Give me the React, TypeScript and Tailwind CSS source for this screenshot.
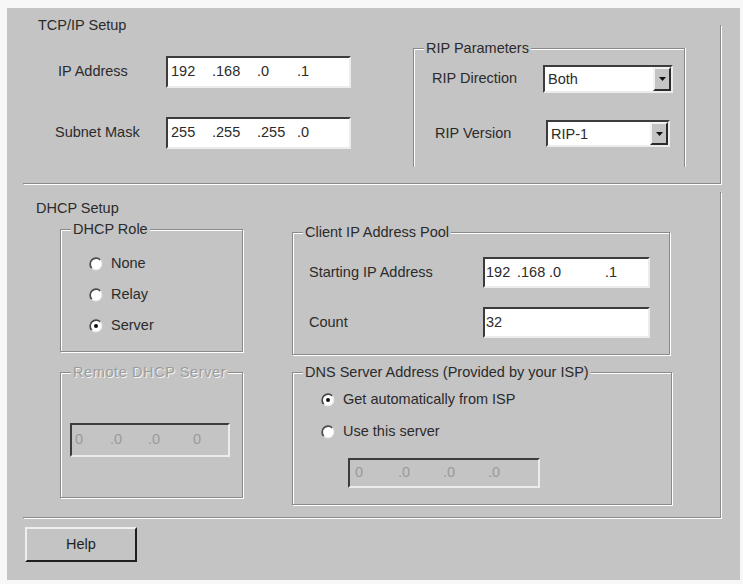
import clsx from 'clsx';
import type { ReactNode } from 'react';

// Classic Windows "Router Setup" style dialog

interface Seg {
  text: string;
  w: string;
}

function IpField({ segs, className, disabled, pad }: { segs: Seg[]; className: string; disabled?: boolean; pad: string }) {
  return (
    <div
      className={clsx(
        'flex items-center border-2 border-t-[#3c3c3c] border-l-[#3c3c3c] border-r-[#ececec] border-b-[#ececec]',
        disabled ? 'bg-[#c4c4c4] text-[#9a9a9a]' : 'bg-white text-[#2b2b2b]',
        pad,
        className
      )}
    >
      {segs.map((s, i) => (
        <span key={i} className={clsx('shrink-0 whitespace-pre', s.w)}>
          {s.text}
        </span>
      ))}
    </div>
  );
}

function Select({ value, className }: { value: string; className: string }) {
  return (
    <div
      className={clsx(
        'flex border-2 border-t-[#3c3c3c] border-l-[#3c3c3c] border-r-[#ececec] border-b-[#ececec] bg-white',
        className
      )}
    >
      <span className="flex-1 pl-[3px] leading-[24px] text-[#2b2b2b]">{value}</span>
      <div className="flex w-[18px] items-center justify-center border-2 border-t-[#f2f2f2] border-l-[#f2f2f2] border-r-[#2a2a2a] border-b-[#2a2a2a] bg-[#c4c4c4]">
        <svg width="7" height="4" viewBox="0 0 7 4">
          <polygon points="0,0 7,0 3.5,4" fill="#111" />
        </svg>
      </div>
    </div>
  );
}

function Radio({ checked, label, className }: { checked?: boolean; label: string; className: string }) {
  return (
    <div className={clsx('flex items-center', className)}>
      <svg width="14" height="14" viewBox="0 0 14 14" className="shrink-0">
        <circle cx="7" cy="7" r="6" fill="#fff" />
        <path d="M2.76 11.24 A6 6 0 0 1 11.24 2.76" fill="none" stroke="#4a4a4a" strokeWidth="1.7" />
        <path d="M11.24 2.76 A6 6 0 0 1 2.76 11.24" fill="none" stroke="#e6e6e6" strokeWidth="1.2" />
        {checked && <circle cx="7" cy="7" r="2" fill="#111" />}
      </svg>
      <span className="ml-[8px] text-[#2b2b2b]">{label}</span>
    </div>
  );
}

function GroupBox({
  label,
  disabled,
  className,
  children,
}: {
  label: string;
  disabled?: boolean;
  className: string;
  children?: ReactNode;
}) {
  return (
    <div className={clsx('border border-[#8a8a8a] shadow-[inset_1px_1px_0_#fff,1px_1px_0_#fff]', className)}>
      <div className="-mt-[10px] ml-[10px] h-[18px] leading-[18px]">
        <span
          className={clsx(
            'bg-[#c4c4c4] px-[2px]',
            disabled ? 'tracking-[0.6px] text-[#9c9c9c] [text-shadow:1px_1px_0_#f4f4f4]' : 'text-[#2b2b2b]'
          )}
        >
          {label}
        </span>
      </div>
      {children}
    </div>
  );
}

export default function App() {
  return (
    <div className="h-[584px] w-[743px] overflow-hidden bg-[#f7f7f7] pt-[8px] pl-[7px] font-['Liberation_Sans',Arial,sans-serif] text-[14.5px]">
      <div className="flex h-[572px] w-[733px] flex-col bg-[#c4c4c4]">
        {/* TCP/IP Setup */}
        <div className="mt-[17px] ml-[16px] h-[159px] w-[698px] shrink-0 border-r border-b border-[#8a8a8a] shadow-[1px_1px_0_#fff]">
          <div className="-mt-[9px] ml-[15px] h-[18px] leading-[18px] text-[#2b2b2b]">TCP/IP Setup</div>
          <div className="mt-[14px] flex">
            <div className="w-[390px] pt-[8px]">
              <div className="flex items-center">
                <span className="w-[143px] pl-[35px] text-[#2b2b2b]">IP Address</span>
                <IpField
                  className="h-[32px] w-[185px]"
                  pad="pl-[3px]"
                  segs={[
                    { text: '192', w: 'w-[41px]' },
                    { text: '.168', w: 'w-[45px]' },
                    { text: '.0', w: 'w-[40px]' },
                    { text: '.1', w: 'w-[30px]' },
                  ]}
                />
              </div>
              <div className="mt-[29px] flex items-center">
                <span className="w-[143px] pl-[32px] text-[#2b2b2b]">Subnet Mask</span>
                <IpField
                  className="h-[32px] w-[185px]"
                  pad="pl-[3px]"
                  segs={[
                    { text: '255', w: 'w-[41px]' },
                    { text: '.255', w: 'w-[45px]' },
                    { text: '.255', w: 'w-[40px]' },
                    { text: '.0', w: 'w-[30px]' },
                  ]}
                />
              </div>
            </div>
            <div className="h-[119px] w-[272px] border-x border-t border-[#8a8a8a] shadow-[inset_1px_1px_0_#fff,1px_0_0_#fff]">
              <div className="-mt-[10px] ml-[10px] h-[18px] leading-[18px]">
                <span className="bg-[#c4c4c4] px-[2px] text-[#2b2b2b]">RIP Parameters</span>
              </div>
              <div className="mt-[8px] flex items-center">
                <span className="ml-[18px] w-[111px] text-[#2b2b2b]">RIP Direction</span>
                <Select value="Both" className="h-[28px] w-[130px]" />
              </div>
              <div className="mt-[27px] flex items-center">
                <span className="ml-[21px] w-[111px] text-[#2b2b2b]">RIP Version</span>
                <Select value="RIP-1" className="h-[27px] w-[124px]" />
              </div>
            </div>
          </div>
        </div>

        {/* DHCP Setup */}
        <div className="mt-[8px] ml-[16px] h-[326px] w-[698px] shrink-0 border-r border-b border-[#8a8a8a] shadow-[1px_1px_0_#fff]">
          <div className="mt-[7px] ml-[13px] h-[18px] leading-[18px] text-[#2b2b2b]">DHCP Setup</div>
          <div className="mt-[12px] flex">
            <div className="ml-[37px] w-[183px]">
              <GroupBox label="DHCP Role" className="h-[123px] w-[183px]">
                <div className="mt-[10px] pl-[28px]">
                  <Radio label="None" className="h-[31px]" />
                  <Radio label="Relay" className="h-[31px]" />
                  <Radio label="Server" checked className="h-[31px]" />
                </div>
              </GroupBox>
              <GroupBox label="Remote DHCP Server" disabled className="mt-[20px] h-[126px] w-[183px]">
                <IpField
                  disabled
                  className="mt-[42px] ml-[9px] h-[34px] w-[160px]"
                  pad="pl-[3px]"
                  segs={[
                    { text: '0', w: 'w-[35px]' },
                    { text: '.0', w: 'w-[38px]' },
                    { text: '.0', w: 'w-[45px]' },
                    { text: '0', w: 'w-[20px]' },
                  ]}
                />
              </GroupBox>
            </div>
            <div className="ml-[49px] w-[380px]">
              <GroupBox label="Client IP Address Pool" className="mt-[3px] h-[123px] w-[378px]">
                <div className="mt-[16px] flex items-center">
                  <span className="ml-[16px] w-[174px] text-[#2b2b2b]">Starting IP Address</span>
                  <IpField
                    className="h-[31px] w-[167px]"
                    pad="pl-[1px]"
                    segs={[
                      { text: '192', w: 'w-[31px]' },
                      { text: '.168', w: 'w-[32px]' },
                      { text: '.0', w: 'w-[56px]' },
                      { text: '.1', w: 'w-[20px]' },
                    ]}
                  />
                </div>
                <div className="mt-[19px] flex items-center">
                  <span className="ml-[16px] w-[174px] text-[#2b2b2b]">Count</span>
                  <IpField className="h-[31px] w-[167px]" pad="pl-[1px]" segs={[{ text: '32', w: 'w-[30px]' }]} />
                </div>
              </GroupBox>
              <GroupBox label="DNS Server Address (Provided by your ISP)" className="mt-[17px] h-[133px] w-[380px]">
                <div className="mt-[3px] pl-[28px]">
                  <Radio label="Get automatically from ISP" checked className="h-[32px]" />
                  <Radio label="Use this server" className="h-[32px]" />
                </div>
                <IpField
                  disabled
                  className="mt-[10px] ml-[55px] h-[30px] w-[192px]"
                  pad="pl-[5px]"
                  segs={[
                    { text: '0', w: 'w-[43px]' },
                    { text: '.0', w: 'w-[45px]' },
                    { text: '.0', w: 'w-[45px]' },
                    { text: '.0', w: 'w-[20px]' },
                  ]}
                />
              </GroupBox>
            </div>
          </div>
        </div>

        {/* Help button */}
        <button className="mt-[9px] ml-[18px] h-[35px] w-[112px] shrink-0 border-2 border-t-[#efefef] border-l-[#efefef] border-r-[#1e1e1e] border-b-[#1e1e1e] bg-[#c4c4c4] text-[#1e1e1e]">
          Help
        </button>
      </div>
    </div>
  );
}
